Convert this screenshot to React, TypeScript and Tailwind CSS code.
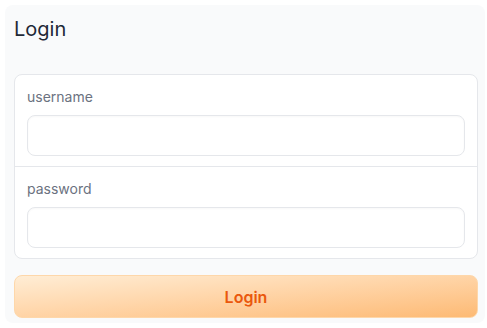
export default function App() {
  return (
    <div className="min-h-screen bg-white pt-[5px] pl-[5px]" style={{ fontFamily: "Inter, 'Noto Sans', sans-serif" }}>
      <div className="w-[480px] h-[318px] rounded-lg bg-[#f9fafb] pl-[9px] pr-[7px] pt-[9px]">
        <h1 className="text-[20px] leading-[30px] text-[#1f2937]">Login</h1>
        <div className="mt-[30px] rounded-lg border border-[#e5e7eb] bg-white">
          <div className="px-[12px] pt-[12px] pb-[10px] border-b border-[#e5e7eb]">
            <label className="block text-[14px] leading-[20px] text-[#6b7280]">username</label>
            <input className="mt-[8px] block w-full h-[41px] rounded-lg border border-[#e5e7eb] bg-white px-3 text-sm outline-none shadow-[inset_0_1px_2px_rgba(0,0,0,0.03)]" />
          </div>
          <div className="px-[12px] pt-[12px] pb-[10px]">
            <label className="block text-[14px] leading-[20px] text-[#6b7280]">password</label>
            <input type="password" className="mt-[8px] block w-full h-[41px] rounded-lg border border-[#e5e7eb] bg-white px-3 text-sm outline-none shadow-[inset_0_1px_2px_rgba(0,0,0,0.03)]" />
          </div>
        </div>
        <button className="mt-[16px] w-full h-[43px] rounded-lg border border-[#fed7aa] bg-gradient-to-br from-[#ffedd5] to-[#fdba74] text-[16px] font-semibold text-[#ea580c]">
          Login
        </button>
      </div>
    </div>
  );
}
